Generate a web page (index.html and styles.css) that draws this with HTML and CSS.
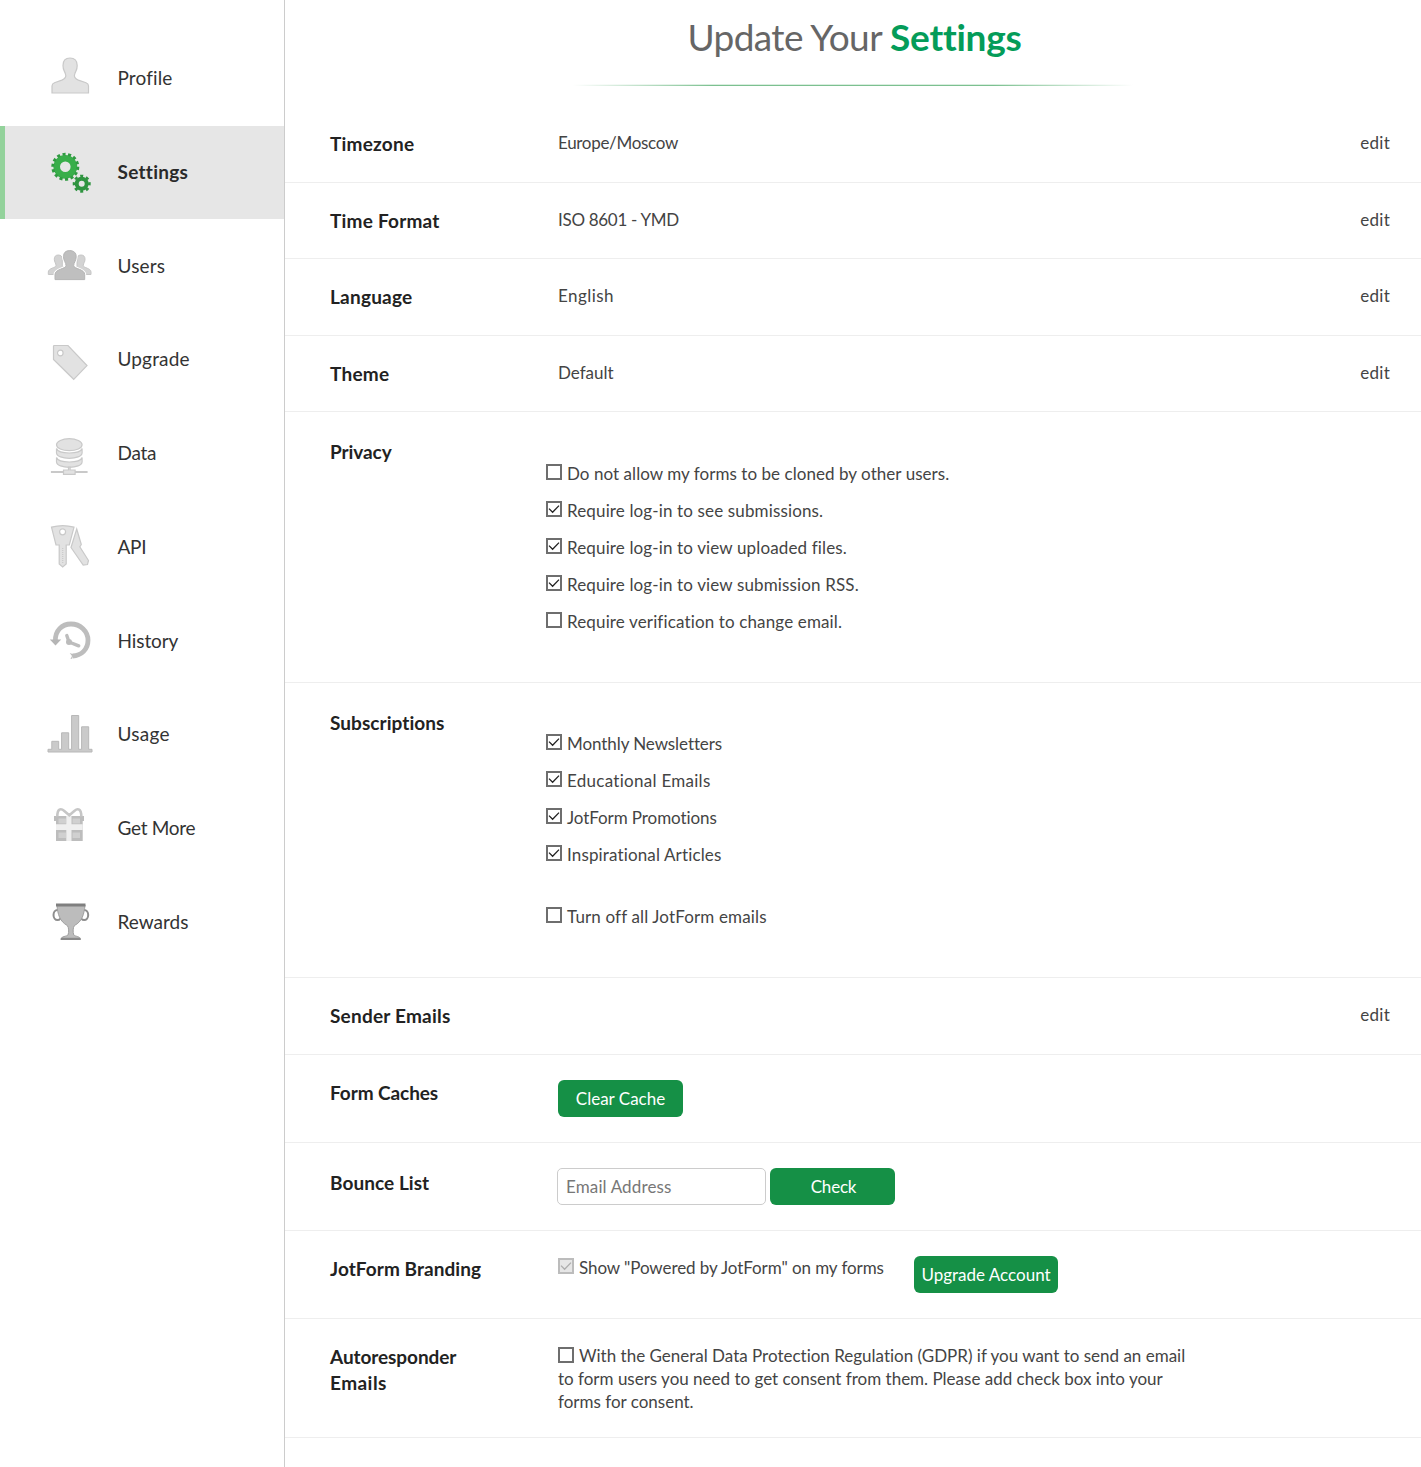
FILE: index.html
```html
<!DOCTYPE html>
<html lang="en">
<head>
<meta charset="utf-8">
<title>Update Your Settings</title>
<link rel="stylesheet" href="styles.css">
</head>
<body>
<svg class="defs" aria-hidden="true">
  <symbol id="box" viewBox="0 0 16 16"><rect x="1" y="1" width="14" height="14" fill="#fff" stroke="#6e6e6e" stroke-width="2"/></symbol>
  <symbol id="box-on" viewBox="0 0 16 16"><rect x="1" y="1" width="14" height="14" fill="#fff" stroke="#6e6e6e" stroke-width="2"/><path d="M3 7.600l3.600 3.600L13 4.600" fill="none" stroke="#222" stroke-width="1.300"/></symbol>
  <symbol id="box-off" viewBox="0 0 16 16"><rect x="1" y="1" width="14" height="14" fill="#e6e6e6" stroke="#bcbcbc" stroke-width="2"/><path d="M3 7.600l3.600 3.600L13 4.600" fill="none" stroke="#adadad" stroke-width="1.300"/></symbol>
</svg>
<div class="page">
<nav class="side">
  <a class="item"><svg class="icon light" viewBox="0 0 48 48"><path d="M24 3c-4.500 0-7 2.800-7 7.500 0 2.500.4 4 1.300 5.600.9 1.700 1.500 3 1.500 4.700 0 2.300-1.300 3.200-4 4.300L8.500 27.700C6.500 28.500 6 29.300 6 31v7h36.500v-7c0-1.700-.5-2.500-2.500-3.300l-7.600-2.600c-2.700-1.100-4-2-4-4.300 0-1.700.6-3 1.500-4.700.9-1.600 1.300-3.100 1.300-5.600C31.200 5.800 28.500 3 24 3z"/></svg><span class="loose">Profile</span></a>
  <a class="item active"><svg class="icon" viewBox="0 0 48 48"><g fill="none" stroke="#38ae4a"><circle cx="19.300" cy="17.800" r="8.600" stroke-width="6.600"/><circle cx="19.300" cy="17.800" r="12.600" stroke-width="2.800" stroke="#2f9a41" pathLength="28" stroke-dasharray="1.100 .9"/><g stroke="#2f9440"><circle cx="35.700" cy="34.700" r="5" stroke-width="4"/><circle cx="35.700" cy="34.700" r="7.700" stroke-width="2.600" pathLength="16" stroke-dasharray="1 1" stroke-dashoffset=".5"/></g></g></svg><span class="looser">Settings</span></a>
  <a class="item"><svg class="icon mid" viewBox="0 0 48 48"><path class="soft" d="M12.300 12c-2.700 0-4 1.600-4 4.200 0 3 1.700 4 1.700 6.300 0 2.500-7.700 2.500-7.700 6.500v2.500H45V29c0-4-7.700-4-7.700-6.500 0-2.300 1.700-3.300 1.700-6.300 0-2.600-1.300-4.200-4-4.200s-4 1.600-4 4.200V24H16.300v-7.800c0-2.600-1.300-4.200-4-4.200z"/><path class="halo" d="M23.700 7.600c-4.200 0-6.200 2.400-6.200 6 0 4.400 2.500 5.800 2.500 9 0 3.500-11 3.200-11 9v5h29.700v-5c0-5.800-11-5.500-11-9 0-3.200 2.500-4.600 2.500-9 0-3.600-2.300-6-6.500-6z"/><path class="front" d="M23.700 7.600c-4.200 0-6.200 2.400-6.200 6 0 4.400 2.500 5.800 2.500 9 0 3.500-11 3.200-11 9v5h29.700v-5c0-5.800-11-5.500-11-9 0-3.200 2.500-4.600 2.500-9 0-3.600-2.300-6-6.500-6z"/></svg><span class="loose">Users</span></a>
  <a class="item"><svg class="icon light" viewBox="0 0 48 48"><path fill-rule="evenodd" d="M8 9.500h14L41 29.600 27.700 43.300 7.500 23.500V10zM14.300 14.200a2.800 2.800 0 1 0 0 5.600 2.800 2.800 0 1 0 0-5.600z"/></svg><span class="loose">Upgrade</span></a>
  <a class="item"><svg class="icon light" viewBox="0 0 48 48"><ellipse cx="23.300" cy="14.700" rx="12.800" ry="6"/><path d="M10.500 18.500c2 6 23.600 6 25.600 0v4.200c0 7.500-25.600 7.500-25.600 0zM10.500 27.500c2 6 23.600 6 25.600 0v4.200c0 7.500-25.600 7.500-25.600 0z"/><path d="M5.500 41.500h35.500v1H5.500z"/><path d="M22.500 37h1.600v3h5v4.300H17.500V40h5z"/></svg><span class="tight">Data</span></a>
  <a class="item"><svg class="icon light" viewBox="0 0 48 48"><path d="M30.700 5l4.600 15.500-1.500 2.300 8.700 13.700-1 4-4.300.5-12.200-17.500z"/><path fill-rule="evenodd" d="M5.500 3.200C12 1.300 21.500 1.300 28 3.200L23.300 21H20.200v19L16.700 43 13.200 40V21H10zM16.600 4.800a3 3 0 1 0 0 6 3 3 0 1 0 0-6z"/><path d="M16.700 24v15" fill="none" stroke-dasharray="1 1"/></svg><span class="tight">API</span></a>
  <a class="item"><svg class="icon" viewBox="0 0 48 48"><g fill="none" stroke="#bdbdbd"><path d="M9.400 23c-.5-10.300 6.600-17 15.600-17 9.300 0 17 7 17 16.300 0 8.900-6.500 15.400-15.500 15.700" stroke-width="4.800"/><path d="M20.800 17.500l2.200 6.500 9.700 3.800" stroke-width="3.400" stroke-linejoin="round" stroke-linecap="round"/></g><path d="M3.800 21.500h11.400l-5.700 6z" fill="#b5b5b5"/><path d="M23.700 35l4.300 1.500-2.500 4.500h-1l1.500-3z" fill="#bdbdbd"/><circle cx="23" cy="24" r="3" fill="#bbb"/></svg><span class="snug">History</span></a>
  <a class="item"><svg class="icon mid" viewBox="0 0 48 48"><path d="M2 38.300h3.800v-8h6.900v8h2.900V21.800h7.100v16.500h2.900V4.500h7.100v33.800h2.900V15.800h7.100v22.500H46v2.700H2z"/></svg><span class="looser">Usage</span></a>
  <a class="item"><svg class="icon" viewBox="0 0 48 48"><path d="M8 11h30v5h-1.300v20H10V16H8z" fill="#bdbdbd"/><path d="M12.500 13.500h7.500v5h-7.500zM26.500 13.500H34v5h-7.500zM12.500 27.500h7.500V33h-7.500zM26.500 27.500H34V33h-7.500z" fill="#d0d0d0"/><path d="M10 19.300h26.700v5.700H10zM20.300 11h5.200v25h-5.200z" fill="#efefef"/><path d="M11.300 11.500c0-8 3.500-8.500 7-5.500l5 4.200 5-4.200c3.500-3 7-2.500 7 5.500" fill="none" stroke="#c6c6c6" stroke-width="2.600"/></svg><span class="tight">Get More</span></a>
  <a class="item"><svg class="icon" viewBox="0 0 48 48"><g fill="none" stroke="#8d8d8d" stroke-width="2"><ellipse cx="11.500" cy="16" rx="4" ry="5"/><ellipse cx="38.200" cy="16" rx="4" ry="5"/></g><path d="M11 6h28c-.8 9-2.800 16.500-10.500 20.500-1.600 2-1.800 6.500-.7 9.500 1.500 1.600 6.200 1 6.700 4.500H14.800c.5-3.500 5.700-2.900 7.200-4.500 1.100-3 .9-7.500-.7-9.500C13.800 22.500 11.500 15 11 6z" fill="#bcbcbc" stroke="#9f9f9f"/><path d="M10 4.500h29.500v3H10z" fill="#7f7f7f"/><path d="M15 38.800h19.500v2.200H15z" fill="#8a8a8a"/></svg><span>Rewards</span></a>
</nav>
<main class="main">
  <header class="head"><h1>Update Your <b>Settings</b></h1><div class="rule"></div></header>
  <section class="row"><h2>Timezone</h2><p class="tight">Europe/Moscow</p><a class="edit">edit</a></section>
  <section class="row"><h2>Time Format</h2><p class="tight">ISO 8601 - YMD</p><a class="edit">edit</a></section>
  <section class="row"><h2>Language</h2><p class="widest">English</p><a class="edit">edit</a></section>
  <section class="row"><h2>Theme</h2><p>Default</p><a class="edit">edit</a></section>
  <section class="row privacy"><h2 class="snug">Privacy</h2>
    <ul>
      <li><svg class="check"><use href="#box"/></svg><span class="near">Do not allow my forms to be cloned by other users.</span></li>
      <li><svg class="check"><use href="#box-on"/></svg><span class="loose">Require log-in to see submissions.</span></li>
      <li><svg class="check"><use href="#box-on"/></svg><span class="loose">Require log-in to view uploaded files.</span></li>
      <li><svg class="check"><use href="#box-on"/></svg><span class="loose">Require log-in to view submission RSS.</span></li>
      <li><svg class="check"><use href="#box"/></svg><span class="loose">Require verification to change email.</span></li>
    </ul></section>
  <section class="row subs"><h2 class="near">Subscriptions</h2>
    <ul>
      <li><svg class="check"><use href="#box-on"/></svg><span class="snug">Monthly Newsletters</span></li>
      <li><svg class="check"><use href="#box-on"/></svg><span class="looser">Educational Emails</span></li>
      <li><svg class="check"><use href="#box-on"/></svg><span class="snug">JotForm Promotions</span></li>
      <li><svg class="check"><use href="#box-on"/></svg><span class="loose">Inspirational Articles</span></li>
      <li class="apart"><svg class="check"><use href="#box"/></svg><span class="loose">Turn off all JotForm emails</span></li>
    </ul></section>
  <section class="row"><h2>Sender Emails</h2><p></p><a class="edit">edit</a></section>
  <section class="row cache"><h2 class="snug">Form Caches</h2><div class="field"><button class="btn">Clear Cache</button></div></section>
  <section class="row bounce"><h2 class="near">Bounce List</h2><div class="field"><input class="input" type="text" placeholder="Email Address"><button class="btn check-btn">Check</button></div></section>
  <section class="row brand"><h2 class="near">JotForm Branding</h2><div class="field"><div class="line snug"><svg class="check"><use href="#box-off"/></svg>Show "Powered by JotForm" on my forms</div><button class="btn wide">Upgrade Account</button></div></section>
  <section class="row gdpr"><h2><span class="snug">Autoresponder</span><br><span class="widest">Emails</span></h2>
    <div class="note"><svg class="check"><use href="#box"/></svg>With the General Data Protection Regulation (GDPR) if you want to send an email<br>to form users you need to get consent from them. Please add check box into your<br>forms for consent.</div></section>
</main>
</div>
</body>
</html>
```
FILE: styles.css
```css
*{box-sizing:border-box}
body{margin:0;background:#fff;font-family:Lato,"Noto Sans",sans-serif;color:#444;font-size:17px;font-variant-ligatures:none}
.defs{display:none}
.page{display:flex;height:1467px;overflow:hidden}
.side{width:285px;flex:none;border-right:1px solid #ccc;padding-top:32.300px}
.item{display:flex;align-items:center;height:93.750px;padding-left:46px;font-size:19px;color:#333}
.item span{white-space:nowrap;margin:-3px 0 0 23.500px}
.active{height:93px;margin-bottom:.75px;background:#e6e6e6;border-left:5px solid #93d29b;padding-left:41px;font-weight:700;color:#2a2a2a}
.icon{width:48px;height:48px;flex:none;display:block}
.light{fill:#e2e2e2;stroke:#c9c9c9;stroke-width:1.200}
.mid{fill:#cacaca;stroke:#b8b8b8}
.mid .soft{fill:#d3d3d3;stroke:#c6c6c6}
.mid .halo{fill:#fff;stroke:#fff;stroke-width:3}
.mid .front{fill:#bfbfbf;stroke:#b4b4b4}
/* letter-spacing steps */
.tight{letter-spacing:-.3px}
.snug{letter-spacing:-.08px}
.near{letter-spacing:.05px}
.loose{letter-spacing:.14px}
.looser{letter-spacing:.28px}
.widest{letter-spacing:.45px}
.main{flex:1;min-width:0}
.head{height:106px;display:flex;flex-direction:column;align-items:center}
h1{margin:15px 0 0 3px;font-size:37px;line-height:44px;font-weight:400;color:#666;white-space:nowrap;letter-spacing:-.6px}
h1 b{color:#049c59;letter-spacing:-.25px}
.rule{width:560px;height:2px;margin-top:25px;background:linear-gradient(90deg,#fff,#86c39700 25%,#7fbf9000 75%,#fff),linear-gradient(#d9eedf 50%,#7cc090 50%)}
.row{height:76.500px;border-bottom:1px solid #eee;padding:0 31px 0 45px;display:grid;grid-template-columns:228px 1fr auto;align-items:start}
h2{margin:25px 0 0;font-size:19px;line-height:26px;font-weight:700;color:#222;white-space:nowrap;letter-spacing:.22px}
h2.snug{letter-spacing:-.08px}
h2.near{letter-spacing:.06px}
p{margin:25px 0 0;line-height:23px;white-space:nowrap}
.edit{margin-top:25px;line-height:23px;letter-spacing:.25px}
ul{list-style:none;margin:43px 0 0 -12px;padding:0}
li{height:37px;line-height:37px;display:flex;white-space:nowrap}
.check{width:16px;height:16px;flex:none;margin-right:5px}
li .check{margin-top:9px}
.privacy{height:271px}
.subs{height:295px}
.subs ul{margin-top:42px}
.privacy h2,.subs h2,.bounce h2{margin-top:27px}
.apart{margin-top:25px}
.cache,.bounce,.brand{height:88px}
.gdpr{height:119px}
.field{display:flex;margin-top:25px}
.btn{width:125px;height:37px;border:0;border-radius:6px;padding:0;background:#159046;color:#fff;font:17px Lato,sans-serif;white-space:nowrap}
.check-btn{padding-left:2px;letter-spacing:-.2px}
.btn.wide{width:144px}
.input{width:209px;height:37px;margin:0 4px 0 -1px;border:1px solid #ccc;border-radius:5px;padding:0 8px;background:#fff;font:17px Lato,sans-serif;letter-spacing:.13px}
.input::placeholder{color:#777}
.line{display:flex;width:356px;line-height:23px;white-space:nowrap}
.line .check{margin-top:2px}
.note{margin-top:25px;line-height:23px;white-space:nowrap}
.note .check{vertical-align:-1px}
```
